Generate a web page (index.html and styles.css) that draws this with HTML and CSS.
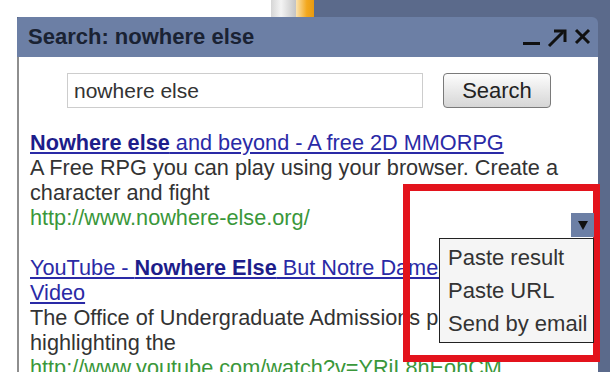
FILE: index.html
```html
<!DOCTYPE html>
<html>
<head>
    <title>Search: nowhere else</title>
    <link rel="stylesheet" href="styles.css">
</head>
<body>
    <div class="page">
        <div class="top">
            <div class="top-blank"></div>
            <div class="top-scroll"></div>
            <div class="top-tab"></div>
        </div>
        <div class="main">
            <div class="gutter"></div>
            <div class="window">
                <div class="titlebar">
                    <span class="title">Search: nowhere else</span>
                    <svg class="controls" width="70" height="20" viewBox="0 0 70 20">
                        <rect x="1" y="14" width="17" height="3" fill="#111"/>
                        <line x1="27" y1="18" x2="41" y2="4" stroke="#111" stroke-width="3"/>
                        <polyline points="32,3 43,3 43,14" fill="none" stroke="#111" stroke-width="3"/>
                        <line x1="54" y1="2" x2="67" y2="15" stroke="#111" stroke-width="3"/>
                        <line x1="67" y1="2" x2="54" y2="15" stroke="#111" stroke-width="3"/>
                    </svg>
                </div>
                <div class="content">
                    <form class="search-row">
                        <input class="query" type="text" value="nowhere else">
                        <button class="search-btn" type="button">Search</button>
                    </form>

                    <div class="result">
                        <a class="result-title" href="#"><b>Nowhere else</b> and beyond - A free 2D MMORPG</a>
                        <div class="snippet">A Free RPG you can play using your browser. Create a character and fight</div>
                        <div class="url">http://www.nowhere-else.org/</div>
                    </div>

                    <div class="result">
                        <a class="result-title" href="#">YouTube - <b>Nowhere Else</b> But Notre Dame Admissions Video</a>
                        <div class="snippet">The Office of Undergraduate Admissions produced this, highlighting the</div>
                        <div class="url">http://www.youtube.com/watch?v=YRjL8hEohCM</div>
                    </div>
                </div>
            </div>
        </div>

        <div class="highlight"></div>
        <div class="menu-toggle">
            <svg width="10" height="9" viewBox="0 0 10 9"><polygon points="0,0 10,0 5,9" fill="#111"/></svg>
        </div>
        <ul class="result-menu">
            <li>Paste result</li>
            <li>Paste URL</li>
            <li>Send by email</li>
        </ul>
    </div>
</body>
</html>
```

FILE: styles.css
```css
body {
    margin: 0;
    background: #fff;
    font-family: "Liberation Sans", Arial, sans-serif;
    color: #333;
    overflow: hidden;
}
.page {
    position: relative;
    width: 610px;
    height: 372px;
    overflow: hidden;
}
.top {
    display: flex;
    height: 17px;
    background: #5b6a8b;
}
.top-blank {
    width: 271px;
    background: #fff;
}
.top-scroll {
    width: 25px;
    background: linear-gradient(to right, #d6d6d6, #f4f4f4 40%, #c4c4c4);
}
.top-tab {
    width: 18px;
    background: linear-gradient(to right, #fbe3b0, #f3a81e 60%, #e89a10);
}
.main {
    display: flex;
    height: 355px;
    background: #5b6a8b;
}
.gutter {
    width: 17px;
    background: #fff;
}
.window {
    width: 581px;
    display: flex;
    flex-direction: column;
}
.titlebar {
    flex-shrink: 0;
    height: 40px;
    display: flex;
    align-items: center;
    padding: 0 6px 0 11px;
    background: #6c7fa5;
    border-radius: 3px 6px 0 0;
}
.title {
    font-size: 22px;
    font-weight: bold;
    color: #1a2233;
}
.controls {
    margin-left: auto;
    margin-top: 2px;
}
.content {
    flex: 1;
    background: #fff;
    border-left: 2px solid #8e8e8e;
    padding: 16px 0 0 11px;
}
.search-row {
    display: flex;
    gap: 20px;
    margin: 0 0 22px 37px;
}
.query {
    box-sizing: border-box;
    width: 356px;
    height: 35px;
    border: 1px solid #cdcdcd;
    padding: 0 6px;
    font-family: inherit;
    font-size: 21px;
    color: #333;
}
.search-btn {
    box-sizing: border-box;
    width: 108px;
    height: 35px;
    border: 1px solid #7a7a7a;
    border-radius: 4px;
    background: linear-gradient(#fdfdfd, #e9e9e9 50%, #d6d6d6);
    font-family: inherit;
    font-size: 22px;
    color: #222;
    padding: 0;
}
.result {
    width: 560px;
    font-size: 21.7px;
    line-height: 25px;
    margin-bottom: 25px;
}
.result-title {
    color: #2a2aa6;
    text-decoration: underline;
}
.result-title b {
    color: #1d1d8a;
}
.snippet {
    color: #333;
}
.url {
    color: #3a973a;
}
.highlight {
    position: absolute;
    left: 403px;
    top: 184px;
    width: 197px;
    height: 178px;
    box-sizing: border-box;
    border: 7px solid #e3131c;
}
.menu-toggle {
    position: absolute;
    left: 571px;
    top: 213px;
    width: 23px;
    height: 24px;
    background: #6c7fa5;
    display: flex;
    align-items: center;
    justify-content: center;
}
.result-menu {
    position: absolute;
    left: 439px;
    top: 238px;
    width: 155px;
    box-sizing: border-box;
    margin: 0;
    padding: 2px 0;
    list-style: none;
    background: #f5f5f5;
    border: 1.5px solid #222;
    font-size: 22px;
    line-height: 33px;
    color: #333;
}
.result-menu li {
    padding-left: 8px;
    white-space: nowrap;
}
```
